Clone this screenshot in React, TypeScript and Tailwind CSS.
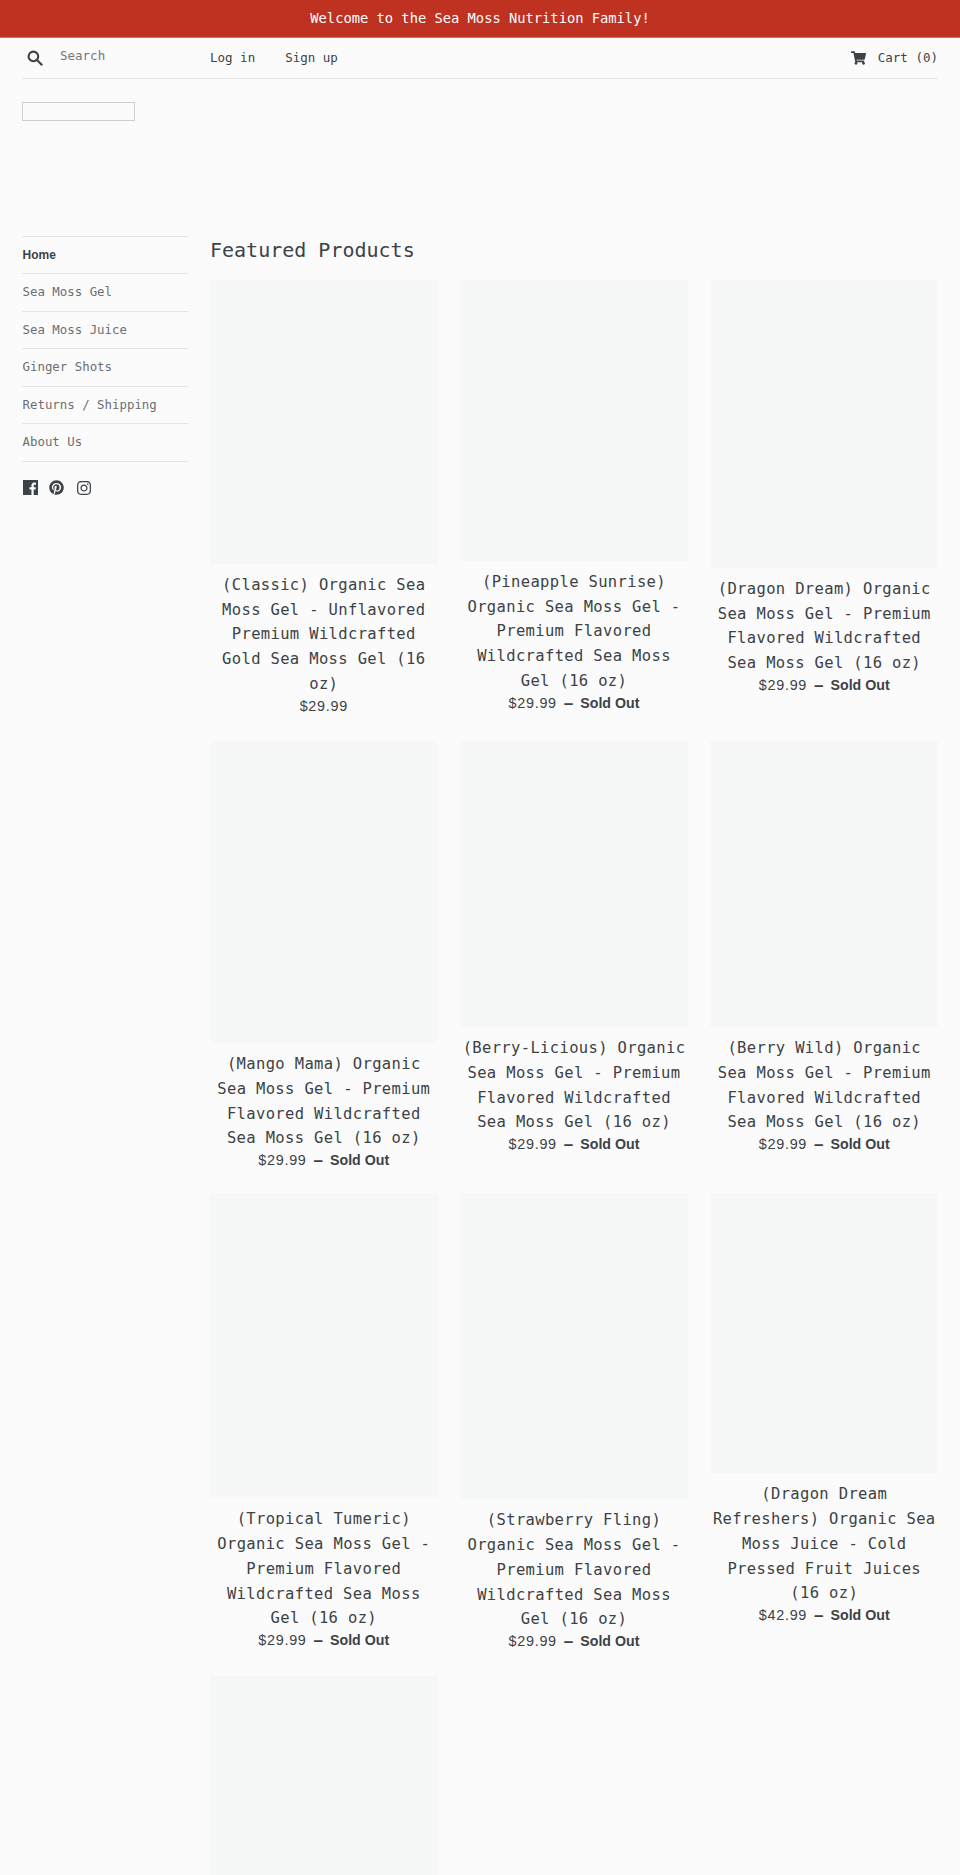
import React from "react";
import { FaPinterest, FaInstagram, FaShoppingCart } from "react-icons/fa";

const mono = "font-['DejaVu_Sans_Mono','Liberation_Mono',monospace]";
const sans = "font-['Liberation_Sans',Arial,sans-serif]";

type P = { h: number; title: string; price: string; sold?: boolean };

const rows: P[][] = [
  [
    { h: 284, title: "(Classic) Organic Sea Moss Gel - Unflavored Premium Wildcrafted Gold Sea Moss Gel (16 oz)", price: "$29.99" },
    { h: 281, title: "(Pineapple Sunrise) Organic Sea Moss Gel - Premium Flavored Wildcrafted Sea Moss Gel (16 oz)", price: "$29.99", sold: true },
    { h: 288, title: "(Dragon Dream) Organic Sea Moss Gel - Premium Flavored Wildcrafted Sea Moss Gel (16 oz)", price: "$29.99", sold: true },
  ],
  [
    { h: 302, title: "(Mango Mama) Organic Sea Moss Gel - Premium Flavored Wildcrafted Sea Moss Gel (16 oz)", price: "$29.99", sold: true },
    { h: 286, title: "(Berry-Licious) Organic Sea Moss Gel - Premium Flavored Wildcrafted Sea Moss Gel (16 oz)", price: "$29.99", sold: true },
    { h: 286, title: "(Berry Wild) Organic Sea Moss Gel - Premium Flavored Wildcrafted Sea Moss Gel (16 oz)", price: "$29.99", sold: true },
  ],
  [
    { h: 305, title: "(Tropical Tumeric) Organic Sea Moss Gel - Premium Flavored Wildcrafted Sea Moss Gel (16 oz)", price: "$29.99", sold: true },
    { h: 306, title: "(Strawberry Fling) Organic Sea Moss Gel - Premium Flavored Wildcrafted Sea Moss Gel (16 oz)", price: "$29.99", sold: true },
    { h: 280, title: "(Dragon Dream Refreshers) Organic Sea Moss Juice - Cold Pressed Fruit Juices (16 oz)", price: "$42.99", sold: true },
  ],
];

const rowGaps = ["mb-[24.6px]", "mb-[22.5px]", "mb-[23.6px]"];

function Card({ p }: { p: P }) {
  return (
    <div className="text-center">
      <div className="bg-[#f6f7f7]" style={{ height: p.h }} />
      <div className={`${mono} mt-[9px] text-[15.5px] leading-[24.7px] tracking-[0.35px] text-[#3d4246]`}>{p.title}</div>
      <div className={`${sans} flex h-[20px] items-center justify-center text-[14.4px] text-[#3d4246]`}>
        <span className="tracking-[0.7px]">{p.price}</span>
        {p.sold && (
          <>
            <span className="mx-[7px] text-[17px] leading-[20px] font-bold">–</span>
            <span className="text-[14.2px] font-bold">Sold Out</span>
          </>
        )}
      </div>
    </div>
  );
}

const nav = ["Sea Moss Gel", "Sea Moss Juice", "Ginger Shots", "Returns / Shipping", "About Us"];

export default function App() {
  return (
    <div className="h-[1875px] overflow-hidden bg-[#fbfbfb] text-[#3d4246]">
      <div className={`${mono} h-[38px] bg-[#bf3121] border-b border-[#d9705f] text-center text-[13.75px] leading-[37px] text-white`}>
        Welcome to the Sea Moss Nutrition Family!
      </div>
      <div className="px-[22px]">
        <div className={`${mono} flex h-[41px] items-center border-b border-[#e6e6e6] text-[12.5px]`}>
          <div className="flex w-[188px] items-center">
            <svg viewBox="0 0 20 20" className="ml-[5px] h-[16px] w-[16px]" fill="none" stroke="#3d4246" strokeWidth="2.6">
              <circle cx="8" cy="8" r="6" />
              <path d="M12.5 12.5 19 19" />
            </svg>
            <span className="ml-[17px] -translate-y-[2px] text-[#73777b]">Search</span>
          </div>
          <span>Log in</span>
          <span className="ml-[30px]">Sign up</span>
          <div className="ml-auto flex items-center">
            <FaShoppingCart className="h-[14px] w-[15px] text-[#3d4246]" />
            <span className="ml-[12px]">Cart (0)</span>
          </div>
        </div>
        <div className="mt-[23px] h-[19px] w-[113px] border border-[#cfcfcf]" />
        <div className="mt-[115px] flex">
          <aside className="w-[166px] shrink-0">
            <ul className={`${mono} text-[12.4px] text-[#6b6f73]`}>
              <li className={`${sans} flex h-[38px] items-center border-y border-[#e4e4e4] pl-[0.5px] text-[12px] font-bold text-[#3d4246]`}>Home</li>
              {nav.map((n) => (
                <li key={n} className="flex h-[37.5px] items-center border-b border-[#e4e4e4] pt-[1px] pl-[0.5px]">{n}</li>
              ))}
            </ul>
            <div className="mt-[18px] flex items-center gap-[11.5px] pl-[0.5px]">
              <svg viewBox="0 0 16 16" className="h-[15px] w-[15px]" fill="#3d4246">
                <path d="M0 0h16v16h-4.6v-6h2l.3-2.4h-2.3V6.2c0-.7.2-1.2 1.2-1.2h1.2V2.8a15 15 0 0 0-1.8-.1c-1.8 0-3 1.1-3 3.1v1.8H6.9V10H9v6H0z" />
              </svg>
              <FaPinterest className="h-[15px] w-[15px]" />
              <FaInstagram className="h-[16px] w-[16px]" />
            </div>
          </aside>
          <main className="ml-[22px] min-w-0 flex-1">
            <h1 className={`${mono} text-[20px] leading-[28px] text-[#3d4246]`}>Featured Products</h1>
            <div className="mt-[16px] flex flex-col">
              {rows.map((r, i) => (
                <div key={i} className={`${rowGaps[i]} grid grid-cols-3 items-start gap-x-[22.7px]`}>
                  {r.map((p) => (
                    <Card key={p.title} p={p} />
                  ))}
                </div>
              ))}
              <div className="grid grid-cols-3 gap-x-[22.7px]">
                <div className="h-[300px] bg-[#f6f7f7]" />
              </div>
            </div>
          </main>
        </div>
      </div>
    </div>
  );
}
